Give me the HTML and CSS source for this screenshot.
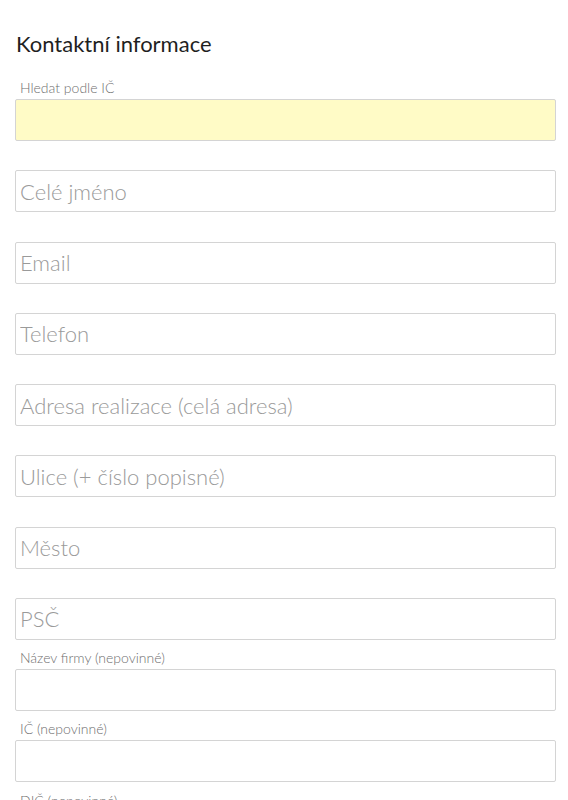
FILE: index.html
```html
<!DOCTYPE html>
<html lang="cs">
<head>
<meta charset="utf-8">
<link rel="stylesheet" href="styles.css">
</head>
<body>
<div class="form">
  <h2 class="title">Kontaktní informace</h2>
  <div class="field">
    <label class="label">Hledat podle IČ</label>
    <input class="input input-ico" type="text">
  </div>
  <div class="field">
    <label class="label hidden">Celé jméno</label>
    <input class="input" type="text" placeholder="Celé jméno">
  </div>
  <div class="field">
    <label class="label hidden">Email</label>
    <input class="input" type="text" placeholder="Email">
  </div>
  <div class="field">
    <label class="label hidden">Telefon</label>
    <input class="input" type="text" placeholder="Telefon">
  </div>
  <div class="field">
    <label class="label hidden">Adresa realizace</label>
    <input class="input" type="text" placeholder="Adresa realizace (celá adresa)">
  </div>
  <div class="field">
    <label class="label hidden">Ulice</label>
    <input class="input" type="text" placeholder="Ulice (+ číslo popisné)">
  </div>
  <div class="field">
    <label class="label hidden">Město</label>
    <input class="input" type="text" placeholder="Město">
  </div>
  <div class="field">
    <label class="label hidden">PSČ</label>
    <input class="input" type="text" placeholder="PSČ">
  </div>
  <div class="field">
    <label class="label">Název firmy (nepovinné)</label>
    <input class="input" type="text">
  </div>
  <div class="field">
    <label class="label">IČ (nepovinné)</label>
    <input class="input" type="text">
  </div>
  <div class="field">
    <label class="label">DIČ (nepovinné)</label>
    <input class="input" type="text">
  </div>
</div>
</body>
</html>
```
FILE: styles.css
```css
html, body {
  margin: 0;
  padding: 0;
  background: #ffffff;
}
body {
  font-family: Lato, "Noto Sans", sans-serif;
}
.form {
  padding: 31px 12px 0 15px;
}
.title {
  margin: 0 0 13px 1px;
  font-size: 22px;
  line-height: 26px;
  font-weight: 400;
  color: #1f1f1f;
}
.field {
  display: flex;
  flex-direction: column;
}
.label {
  display: flex;
  align-items: flex-end;
  height: 29.25px;
  box-sizing: border-box;
  padding: 0 0 3px 5px;
  font-size: 14px;
  line-height: 17px;
  font-weight: 300;
  color: #6f6f6f;
}
.field:first-of-type .label {
  height: 29px;
}
.hidden {
  visibility: hidden;
}
.input {
  display: block;
  width: 100%;
  height: 42px;
  box-sizing: border-box;
  margin: 0;
  padding: 0 4px;
  border: 1px solid #d4d4d4;
  border-radius: 2px;
  background: #fff;
  font-family: Lato, "Noto Sans", sans-serif;
  font-size: 22px;
  font-weight: 300;
  color: #333;
  outline: none;
}
.input::placeholder {
  color: #9a9a9a;
  opacity: 1;
}
.input-ico {
  background: #fffbc6;
}
```
